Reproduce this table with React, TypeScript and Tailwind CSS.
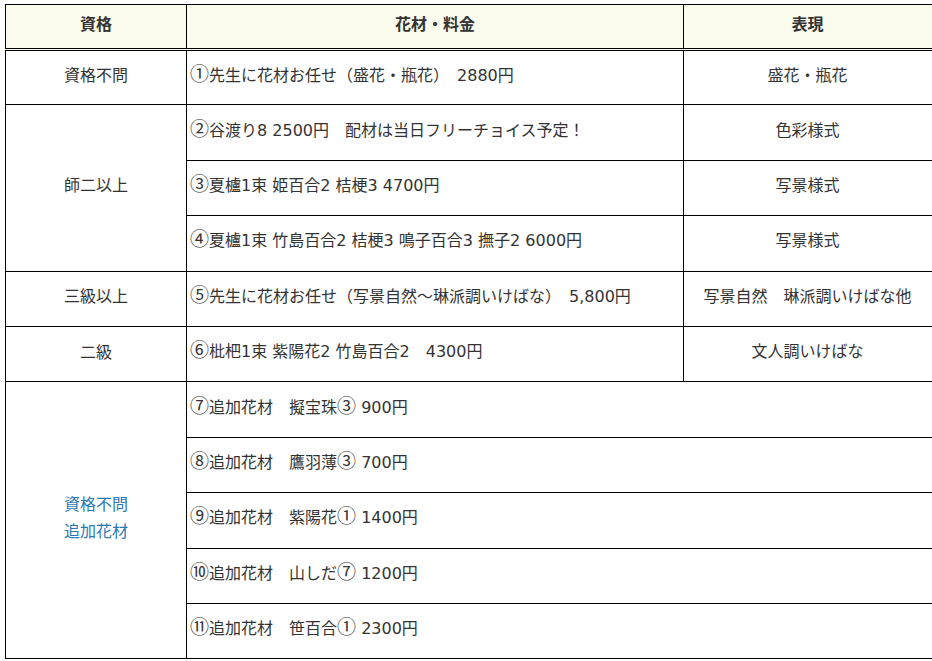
const font = {
  fontFamily: '"DejaVu Sans", "Noto Sans CJK JP", sans-serif',
};
const cjk = {
  fontFamily: '"Noto Sans CJK JP", sans-serif',
};

type Row = {
  grade?: { label: React.ReactNode; span: number; blue?: boolean };
  item: string;
  style?: string;
};

const rows: Row[] = [
  { grade: { label: "資格不問", span: 1 }, item: "①先生に花材お任せ（盛花・瓶花）　2880円", style: "盛花・瓶花" },
  { grade: { label: "師二以上", span: 3 }, item: "②谷渡り8 2500円　配材は当日フリーチョイス予定！", style: "色彩様式" },
  { item: "③夏櫨1束 姫百合2 桔梗3 4700円", style: "写景様式" },
  { item: "④夏櫨1束 竹島百合2 桔梗3 鳴子百合3 撫子2 6000円", style: "写景様式" },
  { grade: { label: "三級以上", span: 1 }, item: "⑤先生に花材お任せ（写景自然～琳派調いけばな）　5,800円", style: "写景自然　琳派調いけばな他" },
  { grade: { label: "二級", span: 1 }, item: "⑥枇杷1束 紫陽花2 竹島百合2　4300円", style: "文人調いけばな" },
  {
    grade: {
      label: (
        <>
          資格不問
          <br />
          追加花材
        </>
      ),
      span: 5,
      blue: true,
    },
    item: "⑦追加花材　擬宝珠③ 900円",
  },
  { item: "⑧追加花材　鷹羽薄③ 700円" },
  { item: "⑨追加花材　紫陽花① 1400円" },
  { item: "⑩追加花材　山しだ⑦ 1200円" },
  { item: "⑪追加花材　笹百合① 2300円" },
];

// circled numbers come out tiny in DejaVu, so hand them to the CJK font, a bit larger
function Item({ text }: { text: string }) {
  const parts = text.split(/([\u2460-\u2473])/);
  return (
    <>
      {parts.map((p, i) =>
        /^[\u2460-\u2473]$/.test(p) ? (
          <span key={i} style={cjk} className="text-[19px] leading-[0]">
            {p}
          </span>
        ) : (
          p
        )
      )}
    </>
  );
}

export default function App() {
  return (
    <div className="min-h-screen w-full overflow-hidden bg-white pt-[4px] pl-[5px]" style={font}>
      <table className="w-[960px] table-fixed border-collapse text-[16px] leading-[24px] text-[#333333]">
        <colgroup>
          <col className="w-[181px]" />
          <col className="w-[497px]" />
          <col className="w-[282px]" />
        </colgroup>
        <thead>
          <tr className="h-[45px] bg-[#fbfbee]">
            <th className="border border-black border-b-[3px] border-b-black border-double pb-[4px] font-bold">資格</th>
            <th className="border border-black border-b-[3px] border-b-black border-double pb-[4px] font-bold">花材・料金</th>
            <th className="border border-black border-b-[3px] border-b-black border-double pb-[4px] pr-[34px] font-bold">表現</th>
          </tr>
        </thead>
        <tbody>
          {rows.map((r, i) => (
            <tr key={i} className="h-[55.4px]">
              {r.grade && (
                <td
                  rowSpan={r.grade.span}
                  className={
                    "border border-black pb-[4px] text-center leading-[27px] " +
                    (r.grade.blue ? "text-[#2a78b4]" : "")
                  }
                >
                  {r.grade.label}
                </td>
              )}
              <td colSpan={r.style ? 1 : 2} className="border border-black pb-[4px] pl-[3px] whitespace-nowrap">
                <Item text={r.item} />
              </td>
              {r.style && (
                <td className="border border-black pb-[4px] pr-[34px] text-center whitespace-nowrap">{r.style}</td>
              )}
            </tr>
          ))}
        </tbody>
      </table>
    </div>
  );
}
